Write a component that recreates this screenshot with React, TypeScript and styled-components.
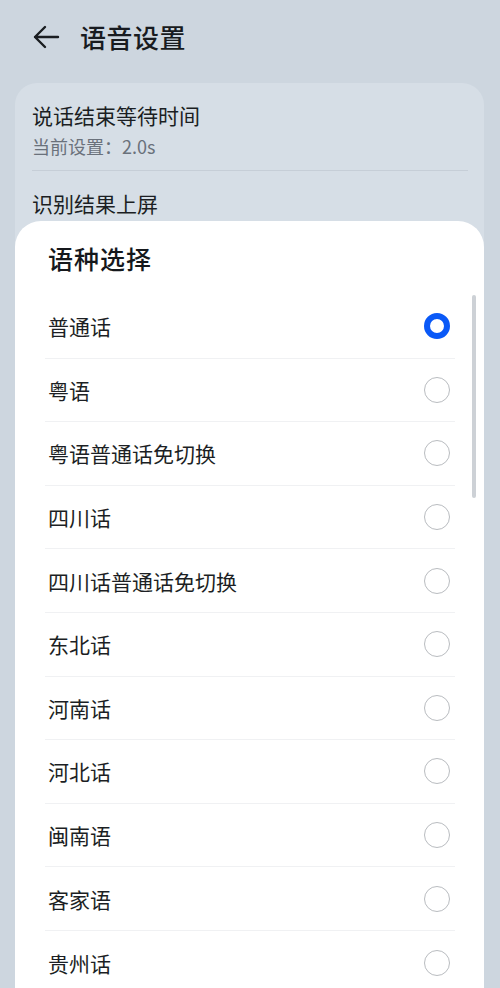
import React, { useState } from 'react';
import styled, { createGlobalStyle } from 'styled-components';

const GlobalStyle = createGlobalStyle`
  html, body {
    margin: 0;
    padding: 0;
    height: 988px;
    overflow: hidden;
    background: #cdd6df;
    font-family: "Noto Sans CJK SC", "Noto Sans", sans-serif;
  }
`;

const Page = styled.div`
  position: relative;
  height: 988px;
  background: #cdd6df;
  overflow: hidden;
`;

const Header = styled.div`
  height: 74px;
  display: flex;
  align-items: center;
  padding-left: 32px;
  gap: 20px;
`;

const Title = styled.h1`
  margin: 0;
  font-size: 26px;
  font-weight: 500;
  color: #181b20;
  line-height: 1;
  letter-spacing: 0.5px;
`;

const Card = styled.div`
  margin: 9px 16px 0 15px;
  height: 600px;
  background: #d6dee6;
  border-radius: 22px;
  padding: 0 16px 0 17px;
`;

const SettingRow = styled.div<{ divider?: boolean }>`
  padding: 18px 0 11px;
  border-bottom: ${p => (p.divider ? '1px solid #c6ced7' : 'none')};
`;

const SettingName = styled.div`
  font-size: 21px;
  color: #1b1e23;
  line-height: 29px;
`;

const SettingValue = styled.div`
  font-size: 18px;
  color: #6a717b;
  line-height: 26px;
  margin-top: 3px;
`;

const Sheet = styled.div`
  position: absolute;
  top: 221px;
  left: 15px;
  right: 16px;
  bottom: -40px;
  background: #ffffff;
  border-radius: 26px 26px 0 0;
`;

const SheetTitle = styled.h2`
  margin: 0;
  height: 74px;
  display: flex;
  align-items: center;
  padding-left: 33px;
  font-size: 25px;
  font-weight: 500;
  color: #15181c;
  letter-spacing: 1px;
`;

const List = styled.ul`
  list-style: none;
  margin: 0 29px 0 30px;
  padding: 0;
`;

const Item = styled.li<{ last?: boolean }>`
  height: 63.6px;
  box-sizing: border-box;
  display: flex;
  align-items: center;
  justify-content: space-between;
  padding: 0 5px 0 3px;
  border-bottom: ${p => (p.last ? 'none' : '1px solid #f0f1f3')};
  cursor: pointer;
`;

const ItemLabel = styled.span`
  font-size: 21px;
  color: #1c1f24;
`;

const Radio = styled.span<{ checked: boolean }>`
  width: 26px;
  height: 26px;
  box-sizing: border-box;
  border-radius: 50%;
  border: ${p => (p.checked ? '6px solid #0a59f7' : '1.3px solid #b9bcc0')};
  background: #fff;
`;

const Scrollbar = styled.div`
  position: absolute;
  top: 74px;
  right: 8px;
  width: 4px;
  height: 203px;
  border-radius: 2px;
  background: #cdd1d6;
`;

const languages = [
  '普通话',
  '粤语',
  '粤语普通话免切换',
  '四川话',
  '四川话普通话免切换',
  '东北话',
  '河南话',
  '河北话',
  '闽南语',
  '客家语',
  '贵州话',
];

function BackArrow() {
  return (
    <svg width="28" height="28" viewBox="0 0 28 28" fill="none">
      <path
        d="M26 14H3M13 4L3 14l10 10"
        stroke="#1a1d21"
        strokeWidth="2.4"
        strokeLinecap="round"
        strokeLinejoin="round"
      />
    </svg>
  );
}

export default function App() {
  const [selected, setSelected] = useState('普通话');

  return (
    <Page>
      <GlobalStyle />
      <Header>
        <BackArrow />
        <Title>语音设置</Title>
      </Header>
      <Card>
        <SettingRow divider>
          <SettingName>说话结束等待时间</SettingName>
          <SettingValue>当前设置：2.0s</SettingValue>
        </SettingRow>
        <SettingRow>
          <SettingName>识别结果上屏</SettingName>
          <SettingValue>开启</SettingValue>
        </SettingRow>
      </Card>

      <Sheet>
        <SheetTitle>语种选择</SheetTitle>
        <Scrollbar />
        <List>
          {languages.map((lang, i) => (
            <Item key={lang} last={i === languages.length - 1} onClick={() => setSelected(lang)}>
              <ItemLabel>{lang}</ItemLabel>
              <Radio checked={selected === lang} />
            </Item>
          ))}
        </List>
      </Sheet>
    </Page>
  );
}
